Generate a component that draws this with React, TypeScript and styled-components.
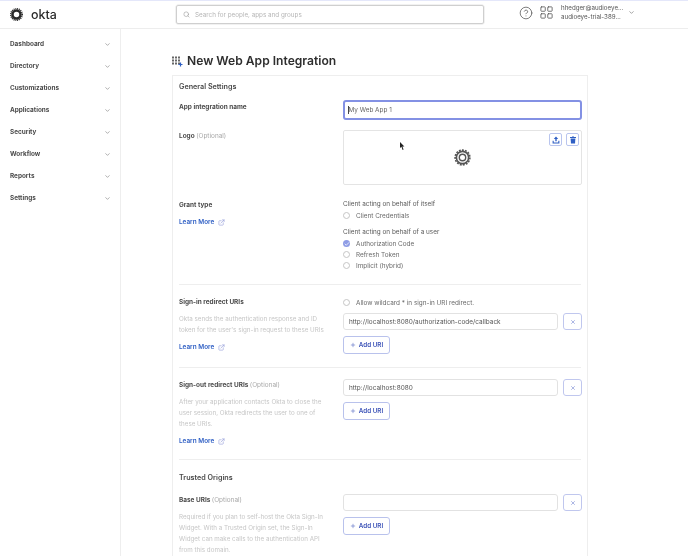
import React from "react";
import styled, { createGlobalStyle } from "styled-components";
import { ChevronDown, Search, CircleHelp, LayoutGrid, X, Plus, ExternalLink, Check } from "lucide-react";

const GlobalStyle = createGlobalStyle`
  html, body {
    margin: 0;
    padding: 0;
    background: #fff;
    font-family: Inter, "Liberation Sans", sans-serif;
  }
  #root {
    height: 556px;
    overflow: hidden;
  }
`;

const Page = styled.div`
  width: 688px;
  height: 556px;
  display: flex;
  flex-direction: column;
  overflow: hidden;
  border-top: 1px solid #e4e7fa;
  box-sizing: border-box;
  filter: blur(0.45px);
`;

const Header = styled.header`
  height: 27px;
  flex: none;
  display: flex;
  align-items: center;
  border-bottom: 1px solid #ededed;
  padding-left: 10px;
`;

const LogoWrap = styled.div`
  width: 166px;
  display: flex;
  align-items: center;
  gap: 8px;
`;

const LogoText = styled.span`
  font-size: 12.4px;
  font-weight: 500;
  color: #2a2a2a;
  line-height: 14px;
`;

const SearchBox = styled.div`
  width: 308px;
  height: 19px;
  box-sizing: border-box;
  border: 1px solid #cfcfcf;
  border-radius: 2px;
  box-shadow: 0 0 0 0.5px #e4e4e4;
  display: flex;
  align-items: center;
  gap: 5px;
  padding-left: 6px;
  font-size: 6.3px;
  color: #b5b5b5;
`;

const HeaderRight = styled.div`
  margin: 0 0 4px 35px;
  display: flex;
  align-items: center;
  color: #555;
`;

const HeaderIcons = styled.div`
  display: flex;
  align-items: center;
  gap: 6px;
`;

const UserBlock = styled.div`
  margin-left: 7px;
  font-size: 6.2px;
  line-height: 8.3px;
  color: #555;
  width: 67px;
`;

const Body = styled.div`
  flex: 1;
  display: flex;
  min-height: 0;
`;

const Sidebar = styled.nav`
  width: 121px;
  flex: none;
  box-sizing: border-box;
  border-right: 1px solid #eeeeee;
  padding: 4px 9px 0 10px;
`;

const NavItem = styled.div`
  height: 22px;
  display: flex;
  align-items: center;
  justify-content: space-between;
  font-size: 6.4px;
  font-weight: 700;
  color: #4a4a4a;
`;

const Main = styled.main`
  flex: 1;
  padding: 21px 0 0 51px;
  min-width: 0;
`;

const TitleRow = styled.div`
  display: flex;
  align-items: center;
  gap: 4px;
  height: 22px;
  margin-bottom: 3px;
`;

const Title = styled.h1`
  margin: 0;
  font-size: 12.1px;
  font-weight: 600;
  color: #2e2e2e;
  line-height: 20px;
`;

const Card = styled.section`
  width: 416px;
  box-sizing: border-box;
  border: 1px solid #eeeeee;
  padding: 5px 6px 30px 6px;
`;

const SectionHeading = styled.h2<{ $gap: number; $mt?: number }>`
  margin: ${(p) => p.$mt ?? 0}px 0 ${(p) => p.$gap}px;
  font-size: 7.2px;
  font-weight: 600;
  color: #4a4a4a;
  line-height: 12px;
`;

const FormRow = styled.div<{ $pt?: number; $pb?: number; $divider?: boolean }>`
  display: grid;
  grid-template-columns: 164px 239px;
  padding-top: ${(p) => p.$pt ?? 0}px;
  padding-bottom: ${(p) => p.$pb ?? 0}px;
  border-bottom: ${(p) => (p.$divider ? "1px solid #eeeeee" : "none")};
`;

const LabelCol = styled.div``;

const Label = styled.div<{ $pt?: number }>`
  padding-top: ${(p) => p.$pt ?? 0}px;
  font-size: 6.45px;
  font-weight: 700;
  color: #4a4a4a;
  line-height: 11px;
`;

const Optional = styled.span`
  font-weight: 400;
  color: #a8a8a8;
`;

const Hint = styled.p`
  margin: 6px 0 0;
  font-size: 6.25px;
  line-height: 11px;
  color: #c6c6c6;
  width: 150px;
`;

const LearnMore = styled.a`
  margin-top: 6px;
  display: flex;
  align-items: center;
  gap: 4px;
  font-size: 6.4px;
  font-weight: 600;
  line-height: 11px;
  color: #2f5fc4;
  svg {
    color: #8f9ad8;
  }
`;

const NameInput = styled.div`
  height: 20px;
  box-sizing: border-box;
  border: 2px solid #8391e4;
  border-radius: 3px;
  display: flex;
  align-items: center;
  padding-left: 3px;
  font-size: 6.4px;
  color: #666;
  &::before {
    content: "";
    width: 0.5px;
    height: 8px;
    background: #444;
  }
`;

const LogoBox = styled.div`
  position: relative;
  height: 55px;
  box-sizing: border-box;
  border: 1px solid #e4e4e4;
  border-radius: 2px;
  display: flex;
  align-items: center;
  justify-content: center;
`;

const LogoActions = styled.div`
  position: absolute;
  top: 2px;
  right: 2px;
  display: flex;
  gap: 4px;
`;

const SmallButton = styled.div`
  width: 13px;
  height: 13px;
  box-sizing: border-box;
  border: 1px solid #b9c5ee;
  border-radius: 2px;
  display: flex;
  align-items: center;
  justify-content: center;
  color: #2f5fc4;
`;

const Cursor = styled.svg`
  position: absolute;
  left: 56px;
  top: 11px;
`;

const GroupTitle = styled.div<{ $mt?: number }>`
  margin-top: ${(p) => p.$mt ?? 0}px;
  font-size: 6.4px;
  line-height: 11px;
  color: #5a5a5a;
`;

const RadioRow = styled.div`
  display: flex;
  align-items: center;
  gap: 6px;
  height: 11px;
  font-size: 6.4px;
  color: #6a6a6a;
`;

const RadioDot = styled.span<{ $checked?: boolean }>`
  width: 7px;
  height: 7px;
  border-radius: 50%;
  box-sizing: border-box;
  flex: none;
  border: ${(p) => (p.$checked ? "none" : "1px solid #c4c4c4")};
  background: ${(p) => (p.$checked ? "#8f9de6" : "#fff")};
  display: flex;
  align-items: center;
  justify-content: center;
  color: #fff;
`;

const UriRow = styled.div<{ $mt?: number }>`
  margin-top: ${(p) => p.$mt ?? 0}px;
  display: flex;
  justify-content: space-between;
`;

const UriInput = styled.div`
  width: 215px;
  height: 17px;
  box-sizing: border-box;
  border: 1px solid #e2e2e2;
  border-radius: 3px;
  display: flex;
  align-items: center;
  padding-left: 5px;
  font-size: 6.45px;
  color: #555;
`;

const RemoveButton = styled.div`
  width: 19px;
  height: 17px;
  box-sizing: border-box;
  border: 1.3px solid #c0c7ee;
  border-radius: 3px;
  display: flex;
  align-items: center;
  justify-content: center;
  color: #5a6fc8;
`;

const AddButton = styled.div`
  margin-top: 6px;
  width: 47px;
  height: 18px;
  box-sizing: border-box;
  border: 1.3px solid #b9c2ec;
  border-radius: 3px;
  display: flex;
  align-items: center;
  justify-content: center;
  gap: 3px;
  font-size: 6.3px;
  font-weight: 600;
  color: #3f55b8;
`;

const navItems = ["Dashboard", "Directory", "Customizations", "Applications", "Security", "Workflow", "Reports", "Settings"];

const OktaLogo = () => (
  <svg width="13" height="13" viewBox="0 0 26 26">
    <circle cx="13" cy="13" r="8" fill="none" stroke="#2a2a2a" strokeWidth="5" />
    <circle cx="13" cy="13" r="11.5" fill="none" stroke="#2a2a2a" strokeWidth="3" strokeDasharray="2 1.6" />
  </svg>
);

const AddAppIcon = () => (
  <svg width="11" height="11" viewBox="0 0 11 11">
    {[0, 3, 6].map((y) =>
      [0, 3, 6].map((x) => <rect key={`${x}-${y}`} x={x} y={y + 0.5} width="2" height="2" fill="#666" />)
    )}
    <path d="M8.5 6.5v4M6.5 8.5h4" stroke="#2f5fc4" strokeWidth="1.2" />
  </svg>
);

const GearIcon = () => (
  <svg width="17" height="17" viewBox="0 0 17 17" fill="none" stroke="#555">
    <circle cx="8.5" cy="8.5" r="6.1" strokeWidth="1.6" />
    <circle cx="8.5" cy="8.5" r="7.4" strokeWidth="1.6" strokeDasharray="1.9 1.2" />
    <circle cx="8.5" cy="8.5" r="3.2" strokeWidth="1.4" />
  </svg>
);

const UploadIcon = () => (
  <svg width="8" height="8" viewBox="0 0 8 8" fill="currentColor">
    <path d="M4 0.5 6.2 3H4.7v2.2H3.3V3H1.8z" />
    <path d="M0.6 4.8h1.1v1.7h4.6V4.8h1.1v2.8H0.6z" />
  </svg>
);

const TrashIcon = () => (
  <svg width="8" height="8" viewBox="0 0 8 8" fill="currentColor">
    <path d="M3 0.4h2v0.7h2v0.9H1v-0.9h2z" />
    <path d="M1.6 2.6h4.8l-0.4 5H2z" />
  </svg>
);

const Learn = () => (
  <LearnMore>
    Learn More <ExternalLink size={7} />
  </LearnMore>
);

const Uri = ({ value, mt }: { value?: string; mt?: number }) => (
  <>
    <UriRow $mt={mt}>
      <UriInput>{value}</UriInput>
      <RemoveButton>
        <X size={6} />
      </RemoveButton>
    </UriRow>
    <AddButton>
      <Plus size={6} /> Add URI
    </AddButton>
  </>
);

const Radio = ({ label, checked }: { label: string; checked?: boolean }) => (
  <RadioRow>
    <RadioDot $checked={checked}>{checked && <Check size={6} strokeWidth={3} />}</RadioDot>
    {label}
  </RadioRow>
);

export default function App() {
  return (
    <>
      <GlobalStyle />
      <Page>
        <Header>
          <LogoWrap>
            <OktaLogo />
            <LogoText>okta</LogoText>
          </LogoWrap>
          <SearchBox>
            <Search size={7} color="#999" />
            Search for people, apps and groups
          </SearchBox>
          <HeaderRight>
            <HeaderIcons>
              <CircleHelp size={14} strokeWidth={1.3} />
              <LayoutGrid size={15} strokeWidth={1.3} />
            </HeaderIcons>
            <UserBlock>
              hhedger@audioeye...
              <br />
              audioeye-trial-389...
            </UserBlock>
            <ChevronDown size={7} color="#666" />
          </HeaderRight>
        </Header>
        <Body>
          <Sidebar>
            {navItems.map((item) => (
              <NavItem key={item}>
                {item}
                <ChevronDown size={7} color="#777" />
              </NavItem>
            ))}
          </Sidebar>
          <Main>
            <TitleRow>
              <AddAppIcon />
              <Title>New Web App Integration</Title>
            </TitleRow>
            <Card>
              <SectionHeading $gap={7}>General Settings</SectionHeading>
              <FormRow $pb={10}>
                <Label $pt={2}>App integration name</Label>
                <NameInput>My Web App 1</NameInput>
              </FormRow>
              <FormRow $pb={14}>
                <Label $pt={1}>
                  Logo <Optional>(Optional)</Optional>
                </Label>
                <LogoBox>
                  <Cursor width="5" height="8" viewBox="0 0 5 8">
                    <path d="M0 0v6l1.4-1.2L2.6 8l1-.5L2.4 4.6 4.4 4.4z" fill="#222" />
                  </Cursor>
                  <GearIcon />
                  <LogoActions>
                    <SmallButton>
                      <UploadIcon />
                    </SmallButton>
                    <SmallButton>
                      <TrashIcon />
                    </SmallButton>
                  </LogoActions>
                </LogoBox>
              </FormRow>
              <FormRow $pb={13} $divider>
                <LabelCol>
                  <Label $pt={1}>Grant type</Label>
                  <Learn />
                </LabelCol>
                <div>
                  <GroupTitle>Client acting on behalf of itself</GroupTitle>
                  <Radio label="Client Credentials" />
                  <GroupTitle $mt={6}>Client acting on behalf of a user</GroupTitle>
                  <Radio label="Authorization Code" checked />
                  <Radio label="Refresh Token" />
                  <Radio label="Implicit (hybrid)" />
                </div>
              </FormRow>
              <FormRow $pt={12} $pb={13} $divider>
                <LabelCol>
                  <Label>Sign-in redirect URIs</Label>
                  <Hint>Okta sends the authentication response and ID token for the user's sign-in request to these URIs</Hint>
                  <Learn />
                </LabelCol>
                <div>
                  <Radio label="Allow wildcard * in sign-in URI redirect." />
                  <Uri value="http://localhost:8080/authorization-code/callback" mt={5} />
                </div>
              </FormRow>
              <FormRow $pt={11} $pb={12} $divider>
                <LabelCol>
                  <Label $pt={1}>
                    Sign-out redirect URIs <Optional>(Optional)</Optional>
                  </Label>
                  <Hint>After your application contacts Okta to close the user session, Okta redirects the user to one of these URIs.</Hint>
                  <Learn />
                </LabelCol>
                <div>
                  <Uri value="http://localhost:8080" />
                </div>
              </FormRow>
              <SectionHeading $gap={10} $mt={12}>
                Trusted Origins
              </SectionHeading>
              <FormRow>
                <LabelCol>
                  <Label $pt={1}>
                    Base URIs <Optional>(Optional)</Optional>
                  </Label>
                  <Hint>Required if you plan to self-host the Okta Sign-In Widget. With a Trusted Origin set, the Sign-In Widget can make calls to the authentication API from this domain.</Hint>
                </LabelCol>
                <div>
                  <Uri />
                </div>
              </FormRow>
            </Card>
          </Main>
        </Body>
      </Page>
    </>
  );
}
